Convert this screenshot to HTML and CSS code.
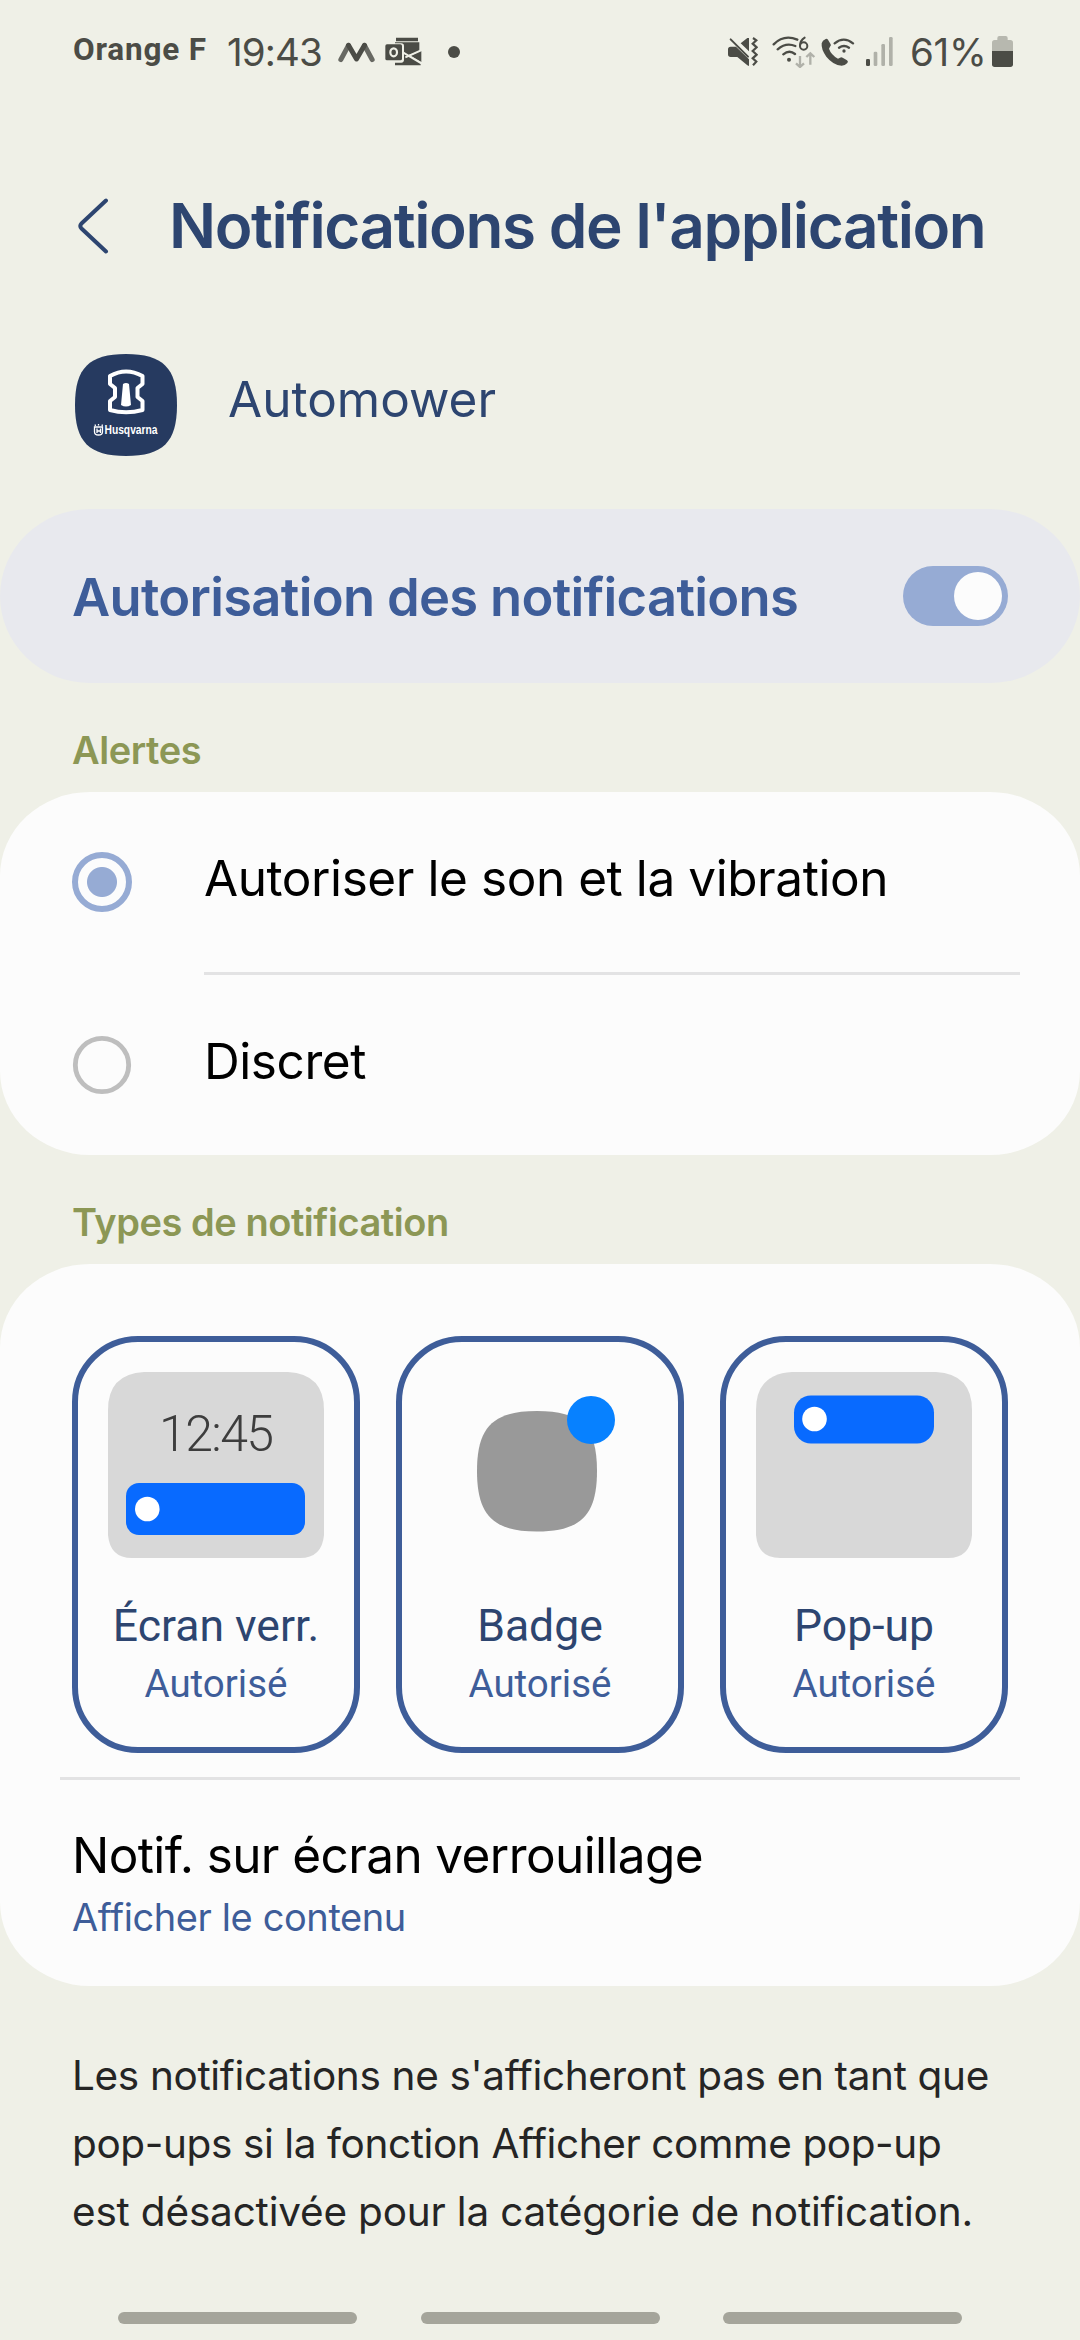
FILE: index.html
```html
<!DOCTYPE html>
<html lang="fr">
<head>
<meta charset="utf-8">
<title>Notifications de l'application</title>
<link rel="stylesheet" href="styles.css">
</head>
<body>
<header class="status">
  <div class="status-left">
    <span class="carrier">Orange F</span>
    <span class="clock">19:43</span>
    <svg class="i-mower" viewBox="834 60 110 72" width="37" height="24"><g fill="none" stroke-width="15" stroke-linecap="round" stroke-linejoin="round"><path d="M842 119L865 76M913 76L936 119" stroke="#686963"/><path d="M865 76L889 117L913 76" stroke="#4b4c46"/></g></svg>
    <svg class="i-mail" viewBox="975 48 111 96" width="37" height="32"><path d="M1008 53H1074V64H1008ZM1005 67H1078V94L1046 105L1082 128V136H1005V128H1024Q1032 127 1032 119V78Q1032 70 1024 70H1005ZM1084 91V126L1052 107Z" fill="#4b4c46"/><path d="M1030 98L1084 130M1036 112L1086 90" stroke="#eff0e7" stroke-width="6"/><rect x="976" y="73" width="50" height="48" rx="5" fill="#4b4c46"/><ellipse cx="1001" cy="97" rx="10" ry="12" fill="none" stroke="#eff0e7" stroke-width="6.500"/></svg>
    <i class="dot"></i>
  </div>
  <div class="status-right">
    <svg class="i-mute" viewBox="54 48 90 96" width="30" height="32"><path d="M54 88Q54 80 62 80H78L117 118V138L112 136L82 111H62Q54 111 54 103ZM92 70L112 54H117V94Z" fill="#4b4c46"/><path d="M62 58L114 110" stroke="#4b4c46" stroke-width="6" stroke-linecap="round"/><path d="M128 54L138 61L127 71L139 82L127 93L139 104L127 115L138 125L128 136" transform="translate(1 0)" fill="none" stroke="#4b4c46" stroke-width="6.500"/></svg>
    <svg class="i-wifi" viewBox="186 48 132 96" width="44" height="32"><g fill="none" stroke="#4b4c46" stroke-width="7" stroke-linecap="round"><path d="M191 73Q222 42 262 59M203 88Q228 66 256 78M220 103Q238 88 255 102"/><path d="M284 53Q270 62 270 77" stroke-width="6"/><circle cx="281" cy="78" r="11" stroke-width="6"/></g><circle cx="237" cy="119" r="6" fill="#4b4c46"/><path d="M270 108V140M258 130L270 141L282 130M301 134V102M289 111L301 100L313 111" fill="none" stroke="#b0b1a9" stroke-width="7"/></svg>
    <svg class="i-call" viewBox="334 48 102 96" width="34" height="32"><path d="M348 57Q352 55 355 59L363 73Q365 77 361 80L358 86Q364 104 385 116L391 113Q395 110 399 113L412 121Q417 125 413 129Q406 137 396 137Q370 135 350 110Q334 88 336 70Q338 61 348 57Z" fill="#4b4c46"/><g fill="none" stroke="#4b4c46" stroke-width="7" stroke-linecap="round"><path d="M375 70Q402 48 430 70M388 83Q403 73 418 83"/></g><circle cx="403" cy="93" r="5" fill="#4b4c46"/></svg>
    <svg class="i-signal" viewBox="468 48 81 96" width="27" height="32"><rect x="468" y="117" width="12" height="21" rx="4" fill="#4b4c46"/><g fill="#b0b1a9"><rect x="491" y="95" width="11" height="43" rx="4"/><rect x="514" y="72" width="11" height="66" rx="4"/><rect x="537" y="51" width="11" height="87" rx="4"/></g></svg>
    <span class="clock pct">61%</span>
    <svg class="i-bat" viewBox="846 48 63 96" width="21" height="32"><path d="M862 60V54Q862 48 868 48H887Q893 48 893 54V60H901Q909 60 909 68V94H846V68Q846 60 854 60Z" fill="#b7b8af"/><path d="M846 93H909V133Q909 141 901 141H854Q846 141 846 133Z" fill="#4b4c46"/></svg>
  </div>
</header>

<div class="titlebar">
  <svg viewBox="0 0 32 56" width="32" height="56"><path d="M29 2.500L4.500 25.500Q2 28 4.500 30.500L29 53.500" fill="none" stroke="#2d4570" stroke-width="4" stroke-linecap="round"/></svg>
  <h1 class="title">Notifications de l'application</h1>
</div>

<div class="app">
  <svg class="app-icon" viewBox="0 0 102 102" width="102" height="102"><path d="M51 0C88 0 102 14 102 51S88 102 51 102S0 88 0 51S14 0 51 0Z" fill="#263a60"/><path d="M35 22Q51 13 67.500 22V30L62.500 34V43L67.500 47V56Q51 60.500 35 56V47L40 43V34L35 30Z" fill="none" stroke="#fff" stroke-width="4" stroke-linejoin="round"/><path d="M48 30Q51 28 54 30L56 51Q51 54 46 51Z" fill="#fff"/><path d="M19.500 73H27.500V78Q27.500 81 23.500 81Q19.500 81 19.500 78ZM22 74.500V79M25.500 74.500V79M22 77H25.500M20.500 72L20 70.500M23.500 71.500V70M27 72L27.500 70.500" fill="none" stroke="#fff" stroke-width="1.300"/><text class="brand" x="29.500" y="80.300" textLength="53" lengthAdjust="spacingAndGlyphs">Husqvarna</text></svg>
  <span class="app-name">Automower</span>
</div>

<section class="allow">
  <span class="allow-label">Autorisation des notifications</span>
  <span class="toggle"><i class="knob"></i></span>
</section>

<h2 class="section">Alertes</h2>
<section class="card">
  <div class="option"><span class="radio on"></span><span class="option-label">Autoriser le son et la vibration</span></div>
  <div class="rule inset"></div>
  <div class="option"><span class="radio"></span><span class="option-label">Discret</span></div>
</section>

<h2 class="section">Types de notification</h2>
<section class="card types-card">
  <div class="types">
    <div class="type">
      <svg viewBox="0 0 216 186" width="216" height="186"><path d="M36 0H180Q216 2 216 38V163Q214 186 192 186H24Q2 186 0 163V38Q0 2 36 0Z" fill="#d8d8d8"/><text class="lock-time" x="51" y="79" textLength="115">12:45</text><rect x="18" y="111" width="179" height="52" rx="13" fill="#086aff"/><circle cx="39.300" cy="137" r="12.300" fill="#fff"/></svg>
      <span class="type-name">Écran verr.</span><span class="type-state">Autorisé</span>
    </div>
    <div class="type">
      <svg viewBox="0 0 216 186" width="216" height="186"><path d="M105 39C149 39 165 55 165 99S149 159.500 105 159.500S45 143 45 99S61 39 105 39Z" fill="#999"/><circle cx="159" cy="48" r="24" fill="#0781ff"/></svg>
      <span class="type-name">Badge</span><span class="type-state">Autorisé</span>
    </div>
    <div class="type">
      <svg viewBox="0 0 216 186" width="216" height="186"><path d="M36 0H180Q216 2 216 38V163Q214 186 192 186H24Q2 186 0 163V38Q0 2 36 0Z" fill="#d8d8d8"/><rect x="38" y="23.500" width="140" height="48" rx="17" fill="#086aff"/><circle cx="58.500" cy="47" r="12.300" fill="#fff"/></svg>
      <span class="type-name">Pop-up</span><span class="type-state">Autorisé</span>
    </div>
  </div>
  <div class="rule"></div>
  <div class="lock">
    <span class="lock-name">Notif. sur écran verrouillage</span>
    <span class="lock-value">Afficher le contenu</span>
  </div>
</section>

<p class="note">Les notifications ne s'afficheront pas en tant que<br><span class="note-mid">pop-ups si la fonction Afficher comme pop-up</span><br><span class="note-end">est désactivée pour la catégorie de notification.</span></p>
<nav class="nav"><i></i><i></i><i></i></nav>
</body>
</html>
```
FILE: styles.css
```css
* { box-sizing: border-box; }
body {
  margin: 0;
  width: 1080px;
  height: 2340px;
  overflow: hidden;
  background: #eff0e7;
  font-family: Inter, "Liberation Sans", sans-serif;
}
svg { display: block; flex: none; }

.status {
  height: 104px;
  padding: 0 67px 0 73px;
  display: flex;
  justify-content: space-between;
  color: #4b4c46;
}
.status-left, .status-right { display: flex; align-items: center; white-space: nowrap; }
.carrier { width: 154px; margin-bottom: 5px; font: 700 31.5px Roboto, sans-serif; letter-spacing: .8px; }
.clock { width: 111px; font-size: 38.5px; letter-spacing: -.9px; }
.i-mail { margin-left: 10px; }
.dot { width: 12px; height: 12px; margin-left: 26px; border-radius: 50%; background: currentColor; }
.i-wifi { margin-left: 14px; }
.i-call { margin-left: 5px; }
.i-signal { margin-left: 11px; }
.pct { width: 75px; margin: 0 7px 0 17px; letter-spacing: -.3px; }

.titlebar { height: 243px; padding-left: 77px; display: flex; align-items: center; }
.title { margin: 0 0 0 60px; font-size: 62px; font-weight: 600; letter-spacing: -1.4px; color: #2d4570; white-space: nowrap; }

.app { height: 102px; margin: 7px 0 53px; padding-left: 75px; display: flex; align-items: center; }
.brand { font: 600 12.5px "Liberation Sans", sans-serif; fill: #fff; }
.app-name { margin: 0 0 12px 51px; font-size: 49.5px; letter-spacing: 0; color: #2d4570; }

.allow {
  height: 174px;
  padding: 0 72px;
  display: flex;
  align-items: center;
  justify-content: space-between;
  border-radius: 90px / 87px;
  background: #e8e9ee;
}
.allow-label { padding-top: 2px; font-size: 52.5px; font-weight: 600; letter-spacing: -.7px; color: #3e5d99; }
.toggle { width: 105px; height: 60px; padding: 6px; display: flex; justify-content: flex-end; border-radius: 30px; background: #96abd4; }
.knob { width: 48px; height: 48px; border-radius: 50%; background: #fcfcfc; }

.section { height: 109px; margin: 0; padding: 26px 72px 0; line-height: 83px; font-size: 38px; font-weight: 600; letter-spacing: -.45px; color: #8c9755; }

.card { border-radius: 90px / 84px; background: #fcfcfc; }
.option { height: 180px; padding-left: 72px; display: flex; align-items: center; }
.radio { width: 60px; height: 60px; border-radius: 50%; border: 5px solid #bebebe; background-clip: padding-box; transform: scale(.97); }
.radio.on { border: 6px solid #96abd4; background: radial-gradient(circle, #96abd4 14.5px, transparent 15.5px); transform: none; }
.option-label { padding: 0 0 8px 72px; font-size: 49.5px; letter-spacing: -.43px; }
.rule { height: 3px; margin: 0 60px; background: #e3e3e4; }
.rule.inset { margin-left: 204px; }

.types-card { height: 722px; padding-top: 72px; }
.types { display: grid; grid-template-columns: repeat(3, 288px); gap: 36px; padding: 0 72px; margin-bottom: 24px; }
.type {
  height: 417px;
  padding-top: 30px;
  display: flex;
  flex-direction: column;
  align-items: center;
  border: 6px solid #3e5d99;
  border-radius: 66px;
  font-family: Roboto, sans-serif;
}
.lock-time { font: 300 50px Roboto, sans-serif; fill: #3d3d3d; }
.type-name { margin-top: 40px; line-height: 56px; font-size: 44.5px; color: #2d4570; }
.type-state { line-height: 60px; font-size: 38.5px; color: #3e5d99; }

.lock { padding: 44px 72px 0; display: flex; flex-direction: column; line-height: 62px; }
.lock-name { font-size: 49.5px; letter-spacing: -.6px; }
.lock-value { font-size: 38px; letter-spacing: -.4px; color: #3e5d99; }

.note { margin: 0; padding: 56px 72px 0; line-height: 68px; font-size: 40.5px; letter-spacing: -.34px; white-space: nowrap; color: #252525; }
.note-mid { letter-spacing: -.39px; }
.note-end { letter-spacing: -.19px; }
.nav { margin: 66px 118px 0; display: flex; justify-content: space-between; }
.nav i { width: 239px; height: 12px; border-radius: 6px; background: #a5a59b; }
```
